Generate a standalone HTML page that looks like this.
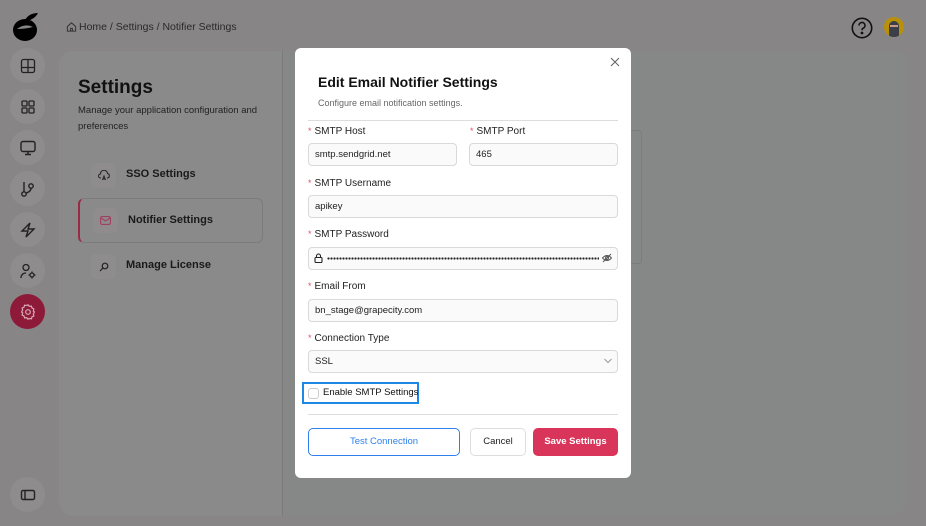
<!DOCTYPE html>
<html><head><meta charset="utf-8"><style>
*{box-sizing:border-box;margin:0;padding:0}
body{width:926px;height:526px;background:#878585;font-family:"Liberation Sans",sans-serif;position:relative;overflow:hidden;color:#111}
.circ{position:absolute;left:10px;width:35px;height:35px;border-radius:50%;background:#8e8c8c;display:flex;align-items:center;justify-content:center}
.abs{position:absolute}
.lbl{position:absolute;font-size:10px;color:#222}
.lbl b{color:#e0506a;font-weight:normal;margin-right:3px;font-size:9px}
.inp{position:absolute;height:23px;border:1px solid #d9d9d9;border-radius:4px;background:#fafafa;font-size:9.5px;padding-left:6px;line-height:21px;color:#222}
.sq{position:absolute;width:25px;height:25px;border-radius:5px;background:#8e8c8c;display:flex;align-items:center;justify-content:center}
</style></head><body>
<svg class="abs" style="left:11px;top:10px" width="32" height="32" viewBox="0 0 32 32"><ellipse cx="14" cy="20" rx="12" ry="11" fill="#000"/><path d="M14 10 Q18 3 27 3 Q24 9 16 11Z" fill="#000"/><path d="M6 19 Q14 13 22 17 Q14 19 6 19Z" fill="#878585"/></svg>
<svg class="abs" style="left:66px;top:21px" width="11" height="11" viewBox="0 0 12 12" fill="none" stroke="#333" stroke-width="1.1"><path d="M1.5 6 6 2l4.5 4v5h-9z"/><path d="M5 11V8h2v3"/></svg>
<div class="abs" style="left:79px;top:21px;font-size:10.5px;color:#2a2a2a">Home / Settings / Notifier Settings</div>
<svg class="abs" style="left:851px;top:17px" width="22" height="22" viewBox="0 0 22 22" fill="none" stroke="#111" stroke-width="1.6"><circle cx="11" cy="11" r="9.7"/><path d="M8 8.5a3 3 0 1 1 4 2.8c-.8.4-1 1-1 2"/><circle cx="11" cy="16" r=".6" fill="#111"/></svg>
<div class="abs" style="left:884px;top:17px;width:20px;height:20px;border-radius:50%;background:#b8900a;overflow:hidden"><div style="position:absolute;left:5px;top:4px;width:10px;height:16px;background:#3a3f48;border-radius:5px 5px 2px 2px"></div><div style="position:absolute;left:6px;top:8px;width:8px;height:2px;background:#c98"></div></div>

<div class="circ" style="top:48px"><svg width="16" height="16" viewBox="0 0 16 16" fill="none" stroke="#222" stroke-width="1.3"><rect x="1.5" y="1.5" width="13" height="13" rx="2"/><path d="M1.5 9.5h13M8 1.5v13"/></svg></div>
<div class="circ" style="top:89px"><svg width="16" height="16" viewBox="0 0 16 16" fill="none" stroke="#222" stroke-width="1.3"><rect x="2" y="2" width="5" height="5" rx="1"/><rect x="9" y="2" width="5" height="5" rx="1"/><rect x="2" y="9" width="5" height="5" rx="1"/><rect x="9" y="9" width="5" height="5" rx="1"/></svg></div>
<div class="circ" style="top:130px"><svg width="18" height="18" viewBox="0 0 18 18" fill="none" stroke="#222" stroke-width="1.4"><rect x="2" y="2.5" width="14" height="10" rx="2"/><path d="M9 12.5v3M6 15.5h6"/></svg></div>
<div class="circ" style="top:171px"><svg width="18" height="18" viewBox="0 0 18 18" fill="none" stroke="#222" stroke-width="1.4"><circle cx="5" cy="14" r="2.2"/><circle cx="12" cy="6" r="2.2"/><path d="M5 2v9.8M12 8.2c0 3-3 4-5 5"/></svg></div>
<div class="circ" style="top:212px"><svg width="18" height="18" viewBox="0 0 18 18" fill="none" stroke="#222" stroke-width="1.4"><path d="M11 2 3 10h6l-2 6 8-8H9z"/></svg></div>
<div class="circ" style="top:253px"><svg width="18" height="18" viewBox="0 0 18 18" fill="none" stroke="#222" stroke-width="1.3"><circle cx="7" cy="5.5" r="3"/><path d="M2 16c0-3 2-5 5-5"/><circle cx="13" cy="13" r="2"/><path d="M13 9.5v1.2M13 15.3v1.2M9.5 13h1.2M15.3 13h1.2"/></svg></div>
<div class="circ" style="top:294px;background:#8e1a3a"><svg width="18" height="18" viewBox="0 0 18 18" fill="none" stroke="#d8a8b4" stroke-width="1.2"><circle cx="9" cy="9" r="2.3"/><path d="M9 1.8l1.4 1.6 2-.3.6 2 1.9.9-.6 2L15.4 9l-1.1 1.9.6 2-1.9.9-.6 2-2-.3L9 16.2l-1.4-1.6-2 .3-.6-2-1.9-.9.6-2L2.6 9l1.1-1.9-.6-2 1.9-.9.6-2 2 .3z"/></svg></div>
<div class="circ" style="top:477px"><svg width="16" height="12" viewBox="0 0 16 12" fill="none" stroke="#222" stroke-width="1.4"><rect x="1.5" y="1.5" width="13" height="9" rx="1.5"/><path d="M5 1.5v9"/></svg></div>

<div class="abs" style="left:59px;top:51px;width:848px;height:465px;border-radius:14px;background:#8a8a8a;overflow:hidden">
 <div class="abs" style="left:223px;top:0;width:1px;height:465px;background:#7a7a7a"></div>
 <div class="abs" style="left:224px;top:0;right:0;height:465px;background:#868887"></div>
</div>
<div class="abs" style="left:620px;top:130px;width:22px;height:134px;border:1px solid #7c7c7c;border-radius:4px"></div>
<div class="abs" style="left:78px;top:77px;font-size:19px;font-weight:bold;color:#111">Settings</div>
<div class="abs" style="left:78px;top:103px;font-size:9.5px;line-height:16px;color:#222;width:200px">Manage your application configuration and preferences</div>
<div class="sq" style="left:91px;top:163px"><svg width="12" height="11" viewBox="0 0 12 11" fill="none" stroke="#222" stroke-width="1"><path d="M3 8H2.5a2 2 0 0 1 0-4A3.5 3.5 0 0 1 9.5 3.5a2.3 2.3 0 0 1 0 4.5H9"/><path d="M4.5 10 6 6l1.5 4M5 9h2"/></svg></div>
<div class="abs" style="left:126px;top:168px;font-size:11px;font-weight:bold;color:#1a1a1a">SSO Settings</div>
<div class="abs" style="left:78px;top:198px;width:185px;height:45px;border:1px solid #7c7a7a;border-left:2px solid #9a2a48;border-radius:6px"></div>
<div class="sq" style="left:93px;top:208px;background:#908c8d"><svg width="11" height="9" viewBox="0 0 11 9" fill="none" stroke="#a04060" stroke-width="1.1"><rect x=".6" y=".6" width="9.8" height="7.8" rx="1.5"/><path d="M1 2l4.5 3L10 2"/></svg></div>
<div class="abs" style="left:128px;top:214px;font-size:11px;font-weight:bold;color:#1a1a1a">Notifier Settings</div>
<div class="sq" style="left:91px;top:254px"><svg width="10" height="10" viewBox="0 0 10 10" fill="none" stroke="#222" stroke-width="1.2"><circle cx="6" cy="4" r="2.8"/><path d="M4 6 1 9"/></svg></div>
<div class="abs" style="left:126px;top:259px;font-size:11px;font-weight:bold;color:#1a1a1a">Manage License</div>

<div class="abs" style="left:295px;top:48px;width:336px;height:430px;background:#fff;border-radius:6px"></div>
<svg class="abs" style="left:610px;top:57px" width="10" height="10" viewBox="0 0 10 10" stroke="#666" stroke-width="1.1"><path d="M1 1l8 8M9 1 1 9"/></svg>
<div class="abs" style="left:318px;top:74px;font-size:14px;font-weight:bold;color:#111">Edit Email Notifier Settings</div>
<div class="abs" style="left:318px;top:98px;font-size:9px;color:#666">Configure email notification settings.</div>
<div class="abs" style="left:308px;top:120px;width:310px;height:1px;background:#ddd"></div>
<div class="lbl" style="left:308px;top:126px"><b>*</b>SMTP Host</div>
<div class="lbl" style="left:470px;top:126px"><b>*</b>SMTP Port</div>
<div class="inp" style="left:308px;top:143px;width:149px">smtp.sendgrid.net</div>
<div class="inp" style="left:469px;top:143px;width:149px">465</div>
<div class="lbl" style="left:308px;top:178px"><b>*</b>SMTP Username</div>
<div class="inp" style="left:308px;top:195px;width:310px">apikey</div>
<div class="lbl" style="left:308px;top:229px"><b>*</b>SMTP Password</div>
<div class="inp" style="left:308px;top:247px;width:310px"></div>
<svg class="abs" style="left:314px;top:253px" width="9" height="10" viewBox="0 0 9 10" fill="none" stroke="#222" stroke-width="1.1"><rect x="1" y="4.5" width="7" height="5" rx="1"/><path d="M2.5 4.5V3a2 2 0 0 1 4 0v1.5"/></svg>
<div class="abs" style="left:327px;top:257px;width:272px;height:3px;background:radial-gradient(circle,#222 0.9px,transparent 1.3px) 0 0/3px 3px repeat-x"></div>
<svg class="abs" style="left:602px;top:253px" width="10" height="10" viewBox="0 0 10 10" fill="none" stroke="#555" stroke-width="1"><path d="M.5 5Q5 0 9.5 5Q5 10 .5 5z"/><circle cx="5" cy="5" r="1.5"/><path d="M1 9 9 1"/></svg>
<div class="lbl" style="left:308px;top:281px"><b>*</b>Email From</div>
<div class="inp" style="left:308px;top:299px;width:310px">bn_stage@grapecity.com</div>
<div class="lbl" style="left:308px;top:333px"><b>*</b>Connection Type</div>
<div class="inp" style="left:308px;top:350px;width:310px">SSL</div>
<svg class="abs" style="left:604px;top:358px" width="8" height="6" viewBox="0 0 8 6" fill="none" stroke="#999"><path d="M.5 1 4 4.5 7.5 1"/></svg>
<div class="abs" style="left:302px;top:382px;width:117px;height:22px;border:2px solid #1e88e5"></div>
<div class="abs" style="left:308px;top:388px;width:11px;height:11px;border:1px solid #ccc;border-radius:3px"></div>
<div class="abs" style="left:323px;top:387px;font-size:9.5px;color:#111">Enable SMTP Settings</div>
<div class="abs" style="left:308px;top:414px;width:310px;height:1px;background:#ddd"></div>
<div class="abs" style="left:308px;top:428px;width:152px;height:28px;border:1px solid #2f80ed;border-radius:5px;color:#2f80ed;font-size:9.5px;text-align:center;line-height:26px">Test Connection</div>
<div class="abs" style="left:470px;top:428px;width:56px;height:28px;border:1px solid #ddd;border-radius:5px;color:#222;font-size:9.5px;text-align:center;line-height:26px">Cancel</div>
<div class="abs" style="left:533px;top:428px;width:85px;height:28px;background:#d9345a;border-radius:5px;color:#fff;font-size:9.5px;font-weight:bold;text-align:center;line-height:28px">Save Settings</div>
</body></html>
